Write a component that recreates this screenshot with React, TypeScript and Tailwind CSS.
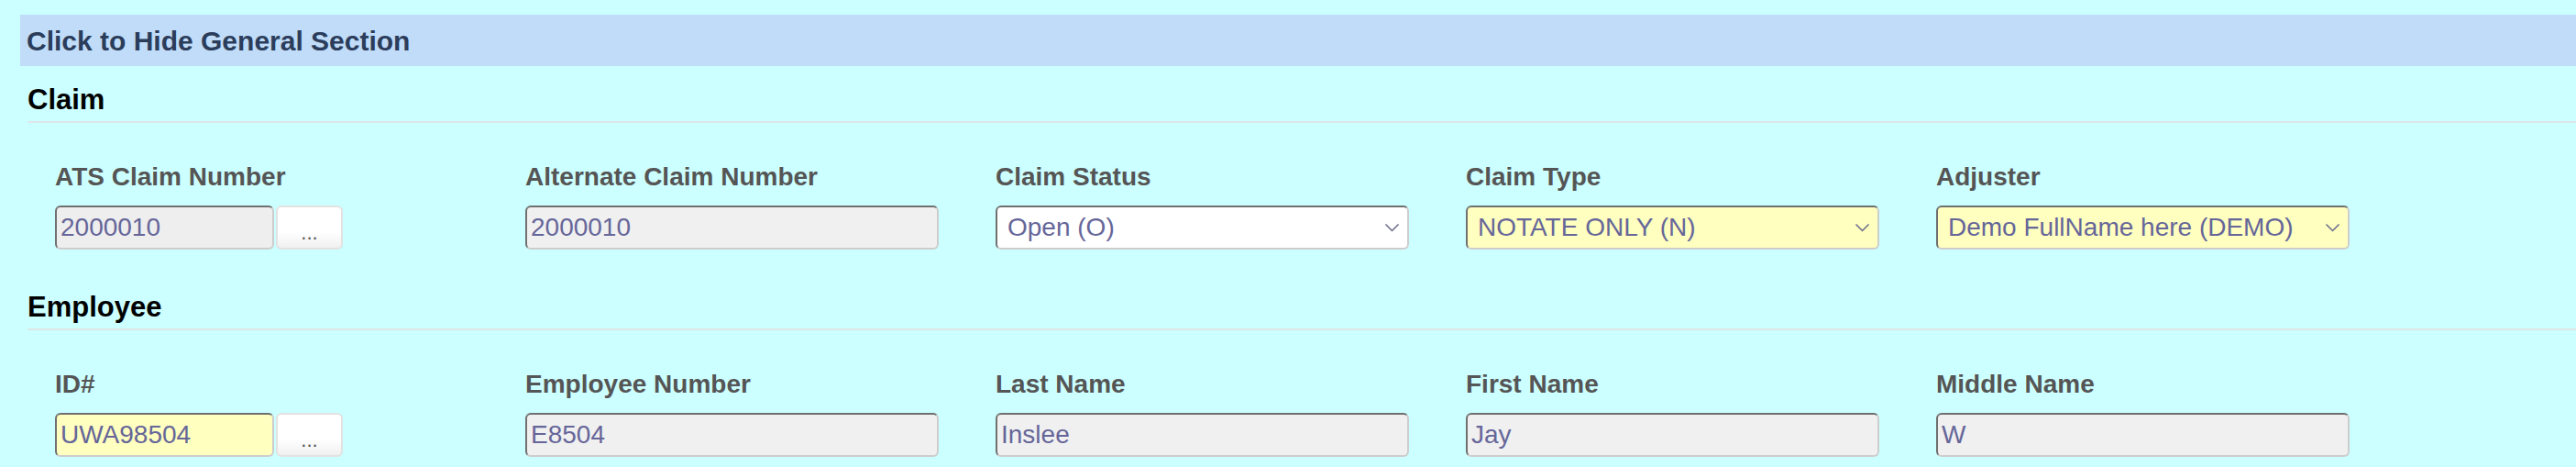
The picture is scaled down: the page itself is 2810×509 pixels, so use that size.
import { ReactNode } from 'react';

type Field = {
  label: string;
  value: string;
  kind: 'text' | 'select';
  bg: string;
  lookup?: boolean;
};

const claimFields: Field[] = [
  { label: 'ATS Claim Number', value: '2000010', kind: 'text', bg: 'bg-[#eeeeee]', lookup: true },
  { label: 'Alternate Claim Number', value: '2000010', kind: 'text', bg: 'bg-[#f0f0f0]' },
  { label: 'Claim Status', value: 'Open (O)', kind: 'select', bg: 'bg-white' },
  { label: 'Claim Type', value: 'NOTATE ONLY (N)', kind: 'select', bg: 'bg-[#ffffc0]' },
  { label: 'Adjuster', value: 'Demo FullName here (DEMO)', kind: 'select', bg: 'bg-[#ffffc0]' },
];

const employeeFields: Field[] = [
  { label: 'ID#', value: 'UWA98504', kind: 'text', bg: 'bg-[#ffffc0]', lookup: true },
  { label: 'Employee Number', value: 'E8504', kind: 'text', bg: 'bg-[#f0f0f0]' },
  { label: 'Last Name', value: 'Inslee', kind: 'text', bg: 'bg-[#f0f0f0]' },
  { label: 'First Name', value: 'Jay', kind: 'text', bg: 'bg-[#f0f0f0]' },
  { label: 'Middle Name', value: 'W', kind: 'text', bg: 'bg-[#f0f0f0]' },
];

const boxBorder =
  'h-[48px] rounded-[6px] border-2 border-t-[#6f6f6f] border-l-[#707070] border-r-[#cdcdcd] border-b-[#cdcdcd] text-[28px] text-[#666699] outline-none';

const Chevron = () => (
  <svg width="17" height="10" viewBox="0 0 17 10" fill="none" className="shrink-0">
    <path d="M1.5 1.5 L8.5 8.5 L15.5 1.5" stroke="#6a6a8a" strokeWidth="1.5" />
  </svg>
);

const FieldBox = ({ field }: { field: Field }) => {
  if (field.kind === 'select') {
    return (
      <div className={`${boxBorder} ${field.bg} flex w-full items-center justify-between pl-[11px] pr-[8px]`}>
        <span>{field.value}</span>
        <Chevron />
      </div>
    );
  }
  if (field.lookup) {
    return (
      <div className="flex items-center gap-[2px]">
        <input readOnly value={field.value} className={`${boxBorder} ${field.bg} w-[239px] px-[4px]`} />
        <button className="h-[48px] w-[73px] rounded-[6px] border-2 border-[#e2e2e2] bg-gradient-to-b from-white from-60% to-[#f0f0f0] pt-[12px] text-[22px] leading-none text-[#555555]">
          ...
        </button>
      </div>
    );
  }
  return <input readOnly value={field.value} className={`${boxBorder} ${field.bg} w-full px-[4px]`} />;
};

const Section = ({ title, children }: { title: string; children: ReactNode }) => (
  <div>
    <div className="border-b-2 border-[#dfe6e6] pb-[5px]">
      <h3 className="text-[31px] font-bold leading-[36px] text-black">{title}</h3>
    </div>
    {children}
  </div>
);

const FieldRow = ({ fields }: { fields: Field[] }) => (
  <div className="grid grid-cols-[repeat(5,451px)] gap-x-[62px] pl-[30px] pt-[43px]">
    {fields.map((f) => (
      <div key={f.label} className="flex flex-col">
        <label className="mb-[15px] text-[28px] font-bold leading-[32px] text-[#555555]">{f.label}</label>
        <FieldBox field={f} />
      </div>
    ))}
  </div>
);

export default function App() {
  return (
    <div className="min-h-[509px] w-full bg-[#ccffff] pl-[22px] pt-[16px] font-['Liberation_Sans',Arial,sans-serif]">
      <div className="flex h-[56px] items-center bg-[#c0dcf8] px-[7px] text-[30px] font-bold text-[#2b3d5b]">
        Click to Hide General Section
      </div>
      <div className="ml-[8px]">
        <div className="pt-[19px]">
          <Section title="Claim">
            <FieldRow fields={claimFields} />
          </Section>
        </div>
        <div className="pt-[45px]">
          <Section title="Employee">
            <FieldRow fields={employeeFields} />
          </Section>
        </div>
      </div>
    </div>
  );
}
